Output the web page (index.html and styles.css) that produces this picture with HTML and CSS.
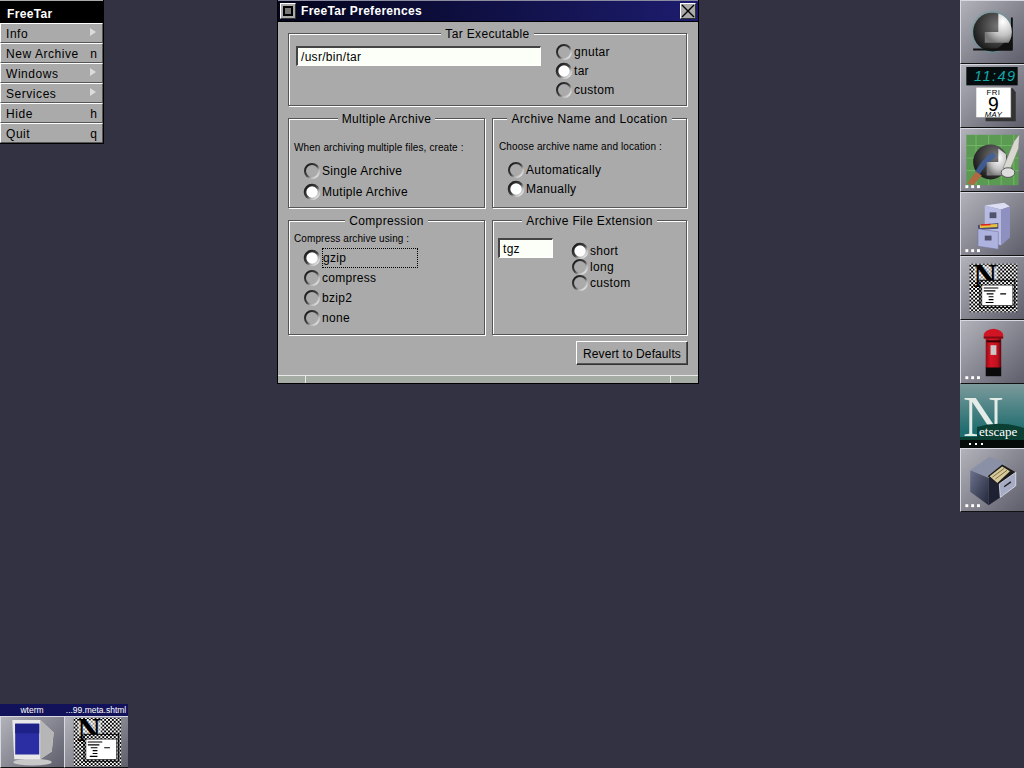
FILE: index.html
```html
<!DOCTYPE html>
<html lang="en">
<head>
<meta charset="utf-8">
<title>FreeTar Preferences</title>
<link rel="stylesheet" href="styles.css">
</head>
<body>
<svg class="defs" width="0" height="0" aria-hidden="true">
  <defs>
    <linearGradient id="ring" x1="0" y1="0" x2="1" y2="1">
      <stop offset="0" stop-color="#111"/><stop offset=".5" stop-color="#444"/><stop offset=".68" stop-color="#aaa"/><stop offset="1" stop-color="#fff"/>
    </linearGradient>
    <radialGradient id="dot" cx=".55" cy=".55" r=".6">
      <stop offset="0" stop-color="#fff"/><stop offset=".7" stop-color="#fff"/><stop offset="1" stop-color="#bbb"/>
    </radialGradient>
    <symbol id="radio-off" viewBox="0 0 18 18">
      <circle cx="9" cy="9" r="7" fill="none" stroke="url(#ring)" stroke-width="2"/>
    </symbol>
    <symbol id="radio-on" viewBox="0 0 18 18">
      <circle cx="9" cy="9" r="7" fill="url(#dot)" stroke="url(#ring)" stroke-width="2.6"/>
    </symbol>
    <pattern id="dither" width="4" height="4" patternUnits="userSpaceOnUse">
      <rect width="4" height="4" fill="#fff"/><rect width="2" height="2" fill="#000"/><rect x="2" y="2" width="2" height="2" fill="#000"/>
    </pattern>
    <radialGradient id="ball" cx=".65" cy=".35" r=".8">
      <stop offset="0" stop-color="#777"/><stop offset="1" stop-color="#0c0c0c"/>
    </radialGradient>
    <radialGradient id="shine" cx=".62" cy=".35" r=".7">
      <stop offset="0" stop-color="#fff"/><stop offset=".6" stop-color="#c4c4c4"/><stop offset="1" stop-color="#777"/>
    </radialGradient>
    <linearGradient id="teal" x1="0" y1="0" x2="0" y2="1">
      <stop offset="0" stop-color="#7c9a9c"/><stop offset=".75" stop-color="#1d6c6e"/>
    </linearGradient>
    <linearGradient id="cabside" x1="0" y1="0" x2="1" y2="1">
      <stop offset="0" stop-color="#6c728c"/><stop offset="1" stop-color="#23273a"/>
    </linearGradient>
    <linearGradient id="boxred" x1="0" y1="0" x2="1" y2="0">
      <stop offset="0" stop-color="#8c0c16"/><stop offset=".3" stop-color="#d81424"/><stop offset=".75" stop-color="#c01020"/><stop offset="1" stop-color="#5c0810"/>
    </linearGradient>
    <clipPath id="ball-clip"><circle cx="32" cy="32" r="20"/></clipPath>
    <symbol id="doc" viewBox="0 0 64 64">
      <rect x="8" y="7" width="50" height="50" fill="url(#dither)"/>
      <rect x="13" y="9" width="24" height="15" fill="#fff" opacity=".55"/>
      <text x="12" y="31" class="doc-n">N</text>
      <rect x="19" y="24" width="36" height="28" fill="url(#dither)" stroke="#000"/>
      <rect x="21" y="29" width="32" height="21" fill="#fff" stroke="#000" stroke-width=".6"/>
      <path d="M23 32h15M23 35h12M26 38h7M40 38h6M28 41h5M28 44h5M25 47h8" stroke="#000" stroke-width="1.2" fill="none"/>
    </symbol>
  </defs>
</svg>

<main class="desktop">
  <nav class="menu">
    <div class="menu-title">FreeTar</div>
    <div class="menu-item"><span>Info</span><i class="arrow"></i></div>
    <div class="menu-item"><span>New Archive</span><kbd>n</kbd></div>
    <div class="menu-item"><span>Windows</span><i class="arrow"></i></div>
    <div class="menu-item"><span>Services</span><i class="arrow"></i></div>
    <div class="menu-item"><span>Hide</span><kbd>h</kbd></div>
    <div class="menu-item"><span>Quit</span><kbd>q</kbd></div>
  </nav>

  <section class="window">
    <header class="titlebar">
      <span class="tb-btn"><i class="mini-square"></i></span>
      <h1 class="tb-title">FreeTar Preferences</h1>
      <span class="tb-btn">
        <svg width="14" height="14" viewBox="0 0 14 14"><path d="M1 1L13 13M13 1L1 13" stroke="#000" stroke-width="1.4"/></svg>
      </span>
    </header>

    <div class="prefs">
      <fieldset class="group group-wide">
        <legend>Tar Executable</legend>
        <div class="tar-row">
          <div class="field field-path">/usr/bin/tar</div>
          <div class="radios radios-19">
            <label class="radio"><svg><use href="#radio-off"/></svg>gnutar</label>
            <label class="radio"><svg><use href="#radio-on"/></svg>tar</label>
            <label class="radio"><svg><use href="#radio-off"/></svg>custom</label>
          </div>
        </div>
      </fieldset>

      <fieldset class="group">
        <legend>Multiple Archive</legend>
        <p class="note note-multi">When archiving multiple files, create :</p>
        <div class="radios radios-21 indent">
          <label class="radio"><svg><use href="#radio-off"/></svg>Single Archive</label>
          <label class="radio"><svg><use href="#radio-on"/></svg>Mutiple Archive</label>
        </div>
      </fieldset>

      <fieldset class="group">
        <legend>Archive Name and Location</legend>
        <p class="note note-name">Choose archive name and location :</p>
        <div class="radios radios-19 indent">
          <label class="radio"><svg><use href="#radio-off"/></svg>Automatically</label>
          <label class="radio"><svg><use href="#radio-on"/></svg>Manually</label>
        </div>
      </fieldset>

      <fieldset class="group">
        <legend>Compression</legend>
        <p class="note note-comp">Compress archive using :</p>
        <div class="radios radios-20 indent">
          <label class="radio"><svg><use href="#radio-on"/></svg><span class="focus">gzip</span></label>
          <label class="radio"><svg><use href="#radio-off"/></svg>compress</label>
          <label class="radio"><svg><use href="#radio-off"/></svg>bzip2</label>
          <label class="radio"><svg><use href="#radio-off"/></svg>none</label>
        </div>
      </fieldset>

      <fieldset class="group">
        <legend>Archive File Extension</legend>
        <div class="ext-row">
          <div class="field field-ext">tgz</div>
          <div class="radios radios-16">
            <label class="radio"><svg><use href="#radio-on"/></svg>short</label>
            <label class="radio"><svg><use href="#radio-off"/></svg>long</label>
            <label class="radio"><svg><use href="#radio-off"/></svg>custom</label>
          </div>
        </div>
      </fieldset>

      <div class="actions"><button class="button" type="button">Revert to Defaults</button></div>
    </div>

    <footer class="resizebar"><i></i><i class="grow"></i><i></i></footer>
  </section>

  <aside class="dock">
    <div class="tile">
      <svg viewBox="0 0 64 64">
        <circle cx="32" cy="32" r="22" fill="#4f9a9a" opacity=".35"/>
        <circle cx="32" cy="32" r="20" fill="url(#ball)"/>
        <path d="M12 50H52V17" fill="none" stroke="#111" stroke-width="2"/>
        <path d="M33 51H52V30Q48 44 33 51Z" fill="#111"/>
        <path d="M24 43V32H38V10H54V43Z" fill="url(#shine)" clip-path="url(#ball-clip)"/>
      </svg>
    </div>
    <div class="tile">
      <svg viewBox="0 0 64 64">
        <rect x="5" y="2" width="53" height="19" fill="#060d0f"/>
        <text x="13" y="16" class="lcd">11:49</text>
        <path d="M21 24H53L56 28V58H25Z" fill="#333"/>
        <rect x="15" y="23" width="36" height="31" fill="#fff" stroke="#999" stroke-width=".5"/>
        <text x="33" y="31" class="cal-s">FRI</text>
        <text x="33" y="47" class="cal-d">9</text>
        <text x="33" y="54" class="cal-s cal-i">MAY</text>
      </svg>
    </div>
    <div class="tile">
      <svg viewBox="0 0 64 64">
        <rect x="5" y="6" width="54" height="52" fill="#5b9a52"/>
        <path d="M5 17H59M5 30H59M5 43H59M15 6V58M28 6V58M41 6V58M54 6V58" stroke="#74b866" stroke-width="1"/>
        <circle cx="30" cy="34" r="18" fill="url(#ball)"/>
        <path d="M14 44Q22 30 32 24L36 28Q24 36 17 50Z" fill="#3f5f9c" opacity=".85"/>
        <path d="M6 56L15 44L21 48L12 58Z" fill="#b06a42"/>
        <path d="M26 48V34H38V20L46 26V48Z" fill="url(#shine)"/>
        <path d="M43 40L54 13L60 5L59 20L50 42Z" fill="#d8d8d0" stroke="#777" stroke-width=".6"/>
        <ellipse cx="48" cy="45" rx="7" ry="5" fill="#ddd" stroke="#555"/>
        <g class="dots"><rect x="4" y="58" width="3" height="3"/><rect x="10" y="58" width="3" height="3"/><rect x="16" y="58" width="3" height="3"/></g>
      </svg>
    </div>
    <div class="tile">
      <svg viewBox="0 0 64 64">
        <path d="M24 13L44 10L50 14L41 17Z" fill="#dcdef4"/>
        <path d="M24 13L41 17V54L24 50Z" fill="#b7bae3"/>
        <path d="M41 17L50 14V46L41 54Z" fill="#8e91c0"/>
        <rect x="29" y="20" width="7" height="6" fill="#50526e"/>
        <path d="M17 33L38 31L38 37L17 38Z" fill="#4c4e70"/>
        <path d="M19 33L37 32L37 35L19 36Z" fill="#e8c040"/>
        <path d="M20 33L30 32.5" stroke="#d22" stroke-width="1.4"/>
        <path d="M17 37L38 40V58L17 55Z" fill="#aeb2de" stroke="#6a6d9a" stroke-width=".5"/>
        <rect x="24" y="44" width="7" height="5" fill="#50526e"/>
        <g class="dots"><rect x="4" y="58" width="3" height="3"/><rect x="10" y="58" width="3" height="3"/><rect x="16" y="58" width="3" height="3"/></g>
      </svg>
    </div>
    <div class="tile"><svg viewBox="0 0 64 64"><use href="#doc"/></svg></div>
    <div class="tile">
      <svg viewBox="0 0 64 64">
        <rect x="25" y="47" width="16" height="10" fill="#0a0a0a"/>
        <rect x="25" y="14" width="16" height="34" fill="url(#boxred)"/>
        <path d="M23 14Q24 9 33 8Q42 9 43 14V18H23Z" fill="#d01424"/>
        <rect x="23" y="16" width="20" height="2" fill="#7c0a14"/>
        <rect x="26" y="20" width="14" height="2" fill="#300"/>
        <rect x="30" y="25" width="6" height="10" fill="#c8c8c8"/>
        <g class="dots"><rect x="4" y="57" width="3" height="3"/><rect x="10" y="57" width="3" height="3"/><rect x="16" y="57" width="3" height="3"/></g>
      </svg>
    </div>
    <div class="tile tile-flat">
      <svg viewBox="0 0 64 64">
        <rect width="64" height="64" fill="url(#teal)"/>
        <text x="3" y="52" class="ns-n">N</text>
        <path d="M17 43Q40 36 64 44V58H0V53H17Z" fill="#0c3f34"/>
        <rect y="56" width="64" height="8" fill="#050b09"/>
        <text x="19" y="52" class="ns-t">etscape</text>
        <g class="dots"><rect x="9" y="59" width="2" height="2"/><rect x="15" y="59" width="2" height="2"/><rect x="21" y="59" width="2" height="2"/></g>
      </svg>
    </div>
    <div class="tile">
      <svg viewBox="0 0 64 64">
        <path d="M9 22L29 8L46 15L28 30Z" fill="#8a90a6"/>
        <path d="M9 22L28 30V58L9 44Z" fill="url(#cabside)"/>
        <path d="M28 30L46 18V46L28 58Z" fill="#1d2132"/>
        <path d="M27 28L42 16L56 24L40 38Z" fill="#1a1a1a"/>
        <path d="M29 28L42 18L50 23L37 35Z" fill="#d7c99a"/>
        <path d="M32 29L44 20M35 31L47 22" stroke="#7a6d40"/>
        <path d="M39 36L56 24V38L40 50Z" fill="#a6acc4" stroke="#e6e8f0" stroke-width=".8"/>
        <path d="M44 39L51 34" stroke="#222" stroke-width="1.5"/>
        <g class="dots"><rect x="4" y="57" width="3" height="3"/><rect x="10" y="57" width="3" height="3"/><rect x="16" y="57" width="3" height="3"/></g>
      </svg>
    </div>
  </aside>

  <div class="minis">
    <div class="mini">
      <div class="mini-title">wterm</div>
      <div class="tile mini-body">
        <svg viewBox="0 0 64 52">
          <ellipse cx="32" cy="47" rx="20" ry="3.5" fill="#c8c8c8"/>
          <path d="M11 3H40L54 16L52 36L40 44H13Z" fill="#e8e8e8"/>
          <path d="M40 3L54 16L52 36L40 44Z" fill="#b6b6b6"/>
          <rect x="14" y="7" width="25" height="32" fill="#2a2ea2"/>
          <rect x="14" y="7" width="25" height="10" fill="#1e2288"/>
        </svg>
      </div>
    </div>
    <div class="mini">
      <div class="mini-title">...99.meta.shtml</div>
      <div class="tile mini-body"><svg viewBox="0 0 64 52"><use href="#doc" x="0" y="-6" width="64" height="64"/></svg></div>
    </div>
  </div>
</main>
</body>
</html>
```
FILE: styles.css
```css
* { box-sizing: border-box; }
html, body { margin: 0; height: 100%; }
body {
  background: #323242;
  color: #000;
  font: 12px/14px "Liberation Sans", Arial, sans-serif;
  overflow: hidden;
}
.defs { position: absolute; }
.desktop { position: relative; width: 1024px; height: 768px; }

/* Application menu */
.menu {
  position: absolute; left: 0; top: 0; width: 104px;
  display: flex; flex-direction: column;
  background: #000;
  padding-right: 1px;
  padding-bottom: 1px;
}
.menu-title {
  height: 23px;
  padding: 6px 0 0 7px;
  background: #000;
  border-top: 1px solid #aaa;
  color: #fff;
  font-weight: bold;
  letter-spacing: .35px;
}
.menu-item {
  height: 20px;
  display: flex; align-items: center; justify-content: space-between;
  padding: 1px 5px 0 5px;
  background: #aaa;
  border-top: 1px solid #fff;
  border-left: 1px solid #fff;
  border-bottom: 1px solid #555;
  border-right: 1px solid #555;
  letter-spacing: .55px;
}
.menu-item kbd { font: inherit; letter-spacing: 0; }
.arrow {
  width: 0; height: 0;
  border-left: 6px solid #dcdcdc;
  border-top: 4px solid transparent;
  border-bottom: 4px solid transparent;
  margin-top: -4px;
  margin-right: 1px;
}

/* Preferences window */
.window {
  position: absolute; left: 277px; top: 0; width: 422px; height: 384px;
  display: flex; flex-direction: column;
  background: #aaa;
  border: 1px solid #000;
  border-top: 0;
}
.titlebar {
  height: 22px; flex: none;
  display: flex; align-items: center;
  padding: 1px 2px 2px 2px;
  background: linear-gradient(90deg, #04041c, #1c1c6e);
  border-top: 1px solid #8c8ca0;
  border-bottom: 1px solid #000;
  color: #fff;
}
.tb-btn {
  width: 16px; height: 16px; flex: none;
  display: flex; align-items: center; justify-content: center;
  background: #aaa;
  border: 1px solid;
  border-color: #fff #333 #333 #fff;
}
.mini-square { width: 10px; height: 10px; border: 2px solid #000; background: #777; }
.tb-title {
  flex: 1; margin: 0; padding-left: 5px;
  font: bold 12px/14px "Liberation Sans", Arial, sans-serif;
  letter-spacing: .3px;
}
.prefs {
  flex: 1;
  display: grid;
  grid-template-columns: 197px 195px;
  grid-template-rows: 80px 97px 122px auto;
  column-gap: 7px;
  row-gap: 5px;
  align-content: start;
  padding: 4px 10px 0;
}
.group {
  min-width: 0; margin: 0;
  padding: 0;
  border: 1px solid #555;
  box-shadow: inset 1px 1px 0 #fff, 1px 1px 0 #fff;
  letter-spacing: .4px;
}
.group-wide { grid-column: 1 / -1; }
.group legend {
  position: relative; top: 1px;
  margin: 0 auto;
  padding: 0 4px;
  line-height: 14px;
  background: #aaa;
  letter-spacing: .35px;
}
.note { margin: 0; font-size: 10px; line-height: 12px; letter-spacing: .1px; }
.note-multi { padding: 17px 0 0 5px; }
.note-name { padding: 16px 0 0 6px; }
.note-comp { padding: 6px 0 0 5px; }

.radios { display: flex; flex-direction: column; letter-spacing: .3px; }
.radios.indent { padding-left: 14px; }
.radio { display: flex; align-items: center; }
.radio svg { width: 18px; height: 18px; flex: none; margin-right: 1px; }
.radios-16 .radio { height: 16px; }
.radios-19 .radio { height: 19px; }
.radios-20 .radio { height: 20px; }
.radios-21 .radio { height: 21px; }
.note-multi + .radios { margin-top: 6px; }
.note-name + .radios { margin-top: 7px; }
.note-comp + .radios { margin-top: 3px; }
.focus {
  width: 96px; height: 20px;
  display: flex; align-items: center;
  border: 1px dotted #000;
}

.field {
  background: #fbfff8;
  border: solid;
  border-width: 2px 1px 1px 2px;
  border-color: #444 #fff #fff #444;
  font-size: 12px;
  letter-spacing: .3px;
  padding: 2px 0 0 3px;
}
.tar-row { display: flex; padding: 6px 0 0 7px; gap: 14px; }
.field-path { width: 245px; height: 20px; }
.tar-row .radios { margin-top: -4px; }
.ext-row { display: flex; padding: 11px 0 0 5px; gap: 18px; }
.field-ext { width: 55px; height: 20px; }
.ext-row .radios { margin-top: 5px; }

.actions { grid-column: 1 / -1; display: flex; justify-content: flex-end; padding-top: 1px; margin-right: -1px; }
.button {
  width: 112px; height: 24px; padding: 2px 0 0;
  background: #aaa;
  border: 1px solid;
  border-color: #fff #333 #333 #fff;
  box-shadow: inset -1px -1px 0 #555;
  font: 12px/14px "Liberation Sans", Arial, sans-serif;
  letter-spacing: .1px;
  color: #000;
}
.resizebar {
  height: 8px; flex: none;
  display: flex;
  background: #a4aca4;
  border-top: 1px solid #e8e8e8;
}
.resizebar i { width: 27px; }
.resizebar .grow { flex: 1; border: solid #e8e8e8; border-width: 0 1px; }

/* Dock */
.dock {
  position: absolute; right: 0; top: 0; width: 64px;
  display: flex; flex-direction: column;
}
.tile {
  width: 64px; height: 64px;
  background: linear-gradient(135deg, #b2b2ba, #5e5e6c);
  border: solid;
  border-width: 1px 0 1px 1px;
  border-color: #d8d8e0 #333 #111 #d8d8e0;
}
.tile svg { display: block; width: 100%; height: 100%; }
.tile-flat { border-width: 0; }
.dots rect { fill: #fff; }

.lcd { fill: #12a8a8; font: italic 15px "Liberation Sans", sans-serif; letter-spacing: 1.5px; }
.cal-s { font: 8px "Liberation Sans", sans-serif; text-anchor: middle; letter-spacing: .5px; }
.cal-i { font-style: italic; }
.cal-d { font: 20px "Liberation Sans", sans-serif; text-anchor: middle; }
.doc-n { font: bold 34px "Liberation Serif", serif; fill: #000; }
.ns-n { font: 56px "Liberation Serif", serif; fill: #e4ece8; }
.ns-t { font: 13px "Liberation Serif", serif; fill: #fff; }

/* Miniaturized windows */
.minis { position: absolute; left: 0; bottom: 0; display: flex; }
.mini { width: 64px; height: 64px; display: flex; flex-direction: column; }
.mini-title {
  height: 12px; flex: none;
  background: #12125a;
  color: #fff;
  font-size: 8.5px; line-height: 12px;
  text-align: center;
  white-space: nowrap;
}
.mini-body { height: 52px; }
```
